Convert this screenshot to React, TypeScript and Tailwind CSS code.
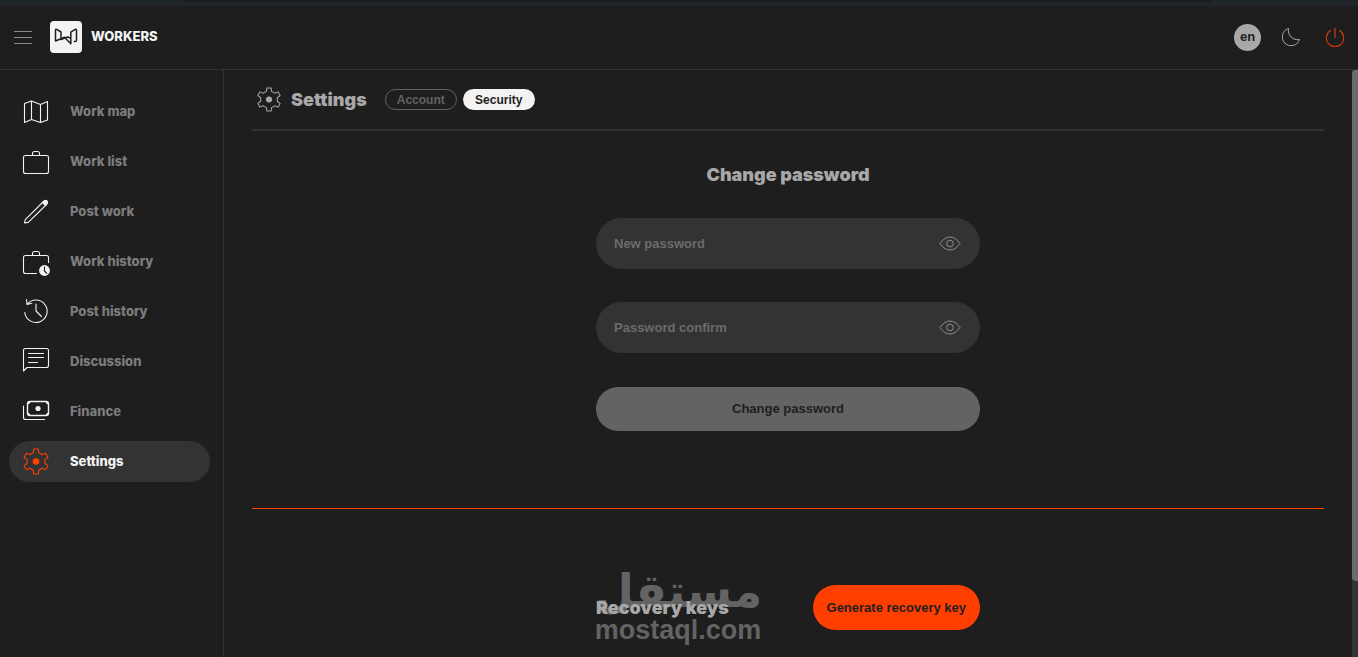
import React, { useState } from 'react';

interface IconProps {
  className?: string;
}

interface NavItem {
  label: string;
  icon: React.FC<IconProps>;
}

const GEAR_PATH =
  'M-2.8-8.6L-2.3-12.5H2.3L2.8-8.6Q4.6-8.2 6.05-6.72L9.68-8.24L11.98-4.26L8.85-1.88Q9.4 0 8.85 1.88L11.98 4.26L9.68 8.24L6.05 6.72Q4.6 8.2 2.8 8.6L2.3 12.5H-2.3L-2.8 8.6Q-4.6 8.2-6.05 6.72L-9.68 8.24L-11.98 4.26L-8.85 1.88Q-9.4 0-8.85-1.88L-11.98-4.26L-9.68-8.24L-6.05-6.72Q-4.6-8.2-2.8-8.6Z';

const SvgIcon: React.FC<{ children: React.ReactNode; className?: string }> = ({ children, className }) => (
  <svg
    viewBox="0 0 28 29"
    className={`shrink-0 ${className ?? ''}`}
    fill="none"
    stroke="currentColor"
    strokeWidth="1.1"
    strokeLinecap="round"
    strokeLinejoin="round"
    aria-hidden="true"
  >
    {children}
  </svg>
);

const MapIcon: React.FC<IconProps> = ({ className }) => (
  <SvgIcon className={className}>
    <path d="M2.5 6.5L9.5 4L18.5 7.5L25.5 4.5V23L18.5 25.5L9.5 22.5L2.5 25.5ZM9.5 4V22.5M18.5 7.5V25.5" />
  </SvgIcon>
);

const BriefcaseIcon: React.FC<IconProps> = ({ className }) => (
  <SvgIcon className={className}>
    <rect x="1.5" y="8.5" width="25" height="18" rx="2" />
    <path d="M10.5 8.5V6.5Q10.5 4.5 12.5 4.5H15.5Q17.5 4.5 17.5 6.5V8.5" />
  </SvgIcon>
);

const PencilIcon: React.FC<IconProps> = ({ className }) => (
  <SvgIcon className={className}>
    <path d="M2.5 26L3.3 22.7L21.5 4.5Q23.2 3 24.6 4.4Q26 5.8 24.5 7.5L6.3 25.4Z" />
    <path d="M20.5 5.5L22.5 3.7Q24 3 25 4Q26 5 25.3 6.5L23.5 8.5Z" fill="currentColor" />
  </SvgIcon>
);

const WorkHistoryIcon: React.FC<IconProps> = ({ className }) => (
  <SvgIcon className={className}>
    <path d="M14.5 26.5H3.5Q1.5 26.5 1.5 24.5V10.5Q1.5 8.5 3.5 8.5H24.5Q26.5 8.5 26.5 10.5V15.5" />
    <path d="M10.5 8.5V6.5Q10.5 4.5 12.5 4.5H15.5Q17.5 4.5 17.5 6.5V8.5" />
    <circle cx="22.5" cy="23.5" r="5.4" fill="currentColor" stroke="none" />
    <path d="M22.5 20V24L24.7 26.3" stroke="#1e1e1e" />
  </SvgIcon>
);

const HistoryIcon: React.FC<IconProps> = ({ className }) => (
  <SvgIcon className={className}>
    <path d="M2.8 15.5A11.2 11.2 0 1 0 5 7.5M4.5 2.5L5 7.5L9.8 6.3M14 7V14L19.5 19.5" />
  </SvgIcon>
);

const DiscussionIcon: React.FC<IconProps> = ({ className }) => (
  <SvgIcon className={className}>
    <path d="M1.5 24V3.5Q1.5 1.5 3.5 1.5H24.5Q26.5 1.5 26.5 3.5V18.5Q26.5 20.5 24.5 20.5H5ZM6.5 6.5H21.5M6.5 10.5H21.5M6.5 15.5H15.5" />
  </SvgIcon>
);

const FinanceIcon: React.FC<IconProps> = ({ className }) => (
  <SvgIcon className={className}>
    <rect x="5.5" y="4.5" width="21" height="14" rx="2.5" strokeWidth="1.4" />
    <path d="M5.5 7Q7.5 6.500 8 4.5M24 4.5Q24.5 6.500 26.5 7M5.5 16Q7.500 16.500 8 18.5M24 18.5Q24.5 16.500 26.5 16" />
    <circle cx="16" cy="11.5" r="2.6" fill="currentColor" stroke="none" />
    <path d="M1.5 9V20.5Q1.5 22.5 3.5 22.5H22.5" />
  </SvgIcon>
);

const GearIcon: React.FC<IconProps> = ({ className }) => (
  <SvgIcon className={className}>
    <g transform="translate(14 14.5)">
      <path d={GEAR_PATH} />
      <circle r="3.3" fill="currentColor" stroke="none" />
    </g>
  </SvgIcon>
);

const EyeIcon: React.FC = () => (
  <svg viewBox="0 0 22 16" className="h-4 w-[22px]" fill="none" stroke="currentColor" aria-hidden="true">
    <path d="M1 7.5Q5.5 1 11 1T21 7.5Q16.5 14 11 14T1 7.5Z" />
    <circle cx="11" cy="7.5" r="3.3" />
  </svg>
);

const NAV_ITEMS: NavItem[] = [
  { label: 'Work map', icon: MapIcon },
  { label: 'Work list', icon: BriefcaseIcon },
  { label: 'Post work', icon: PencilIcon },
  { label: 'Work history', icon: WorkHistoryIcon },
  { label: 'Post history', icon: HistoryIcon },
  { label: 'Discussion', icon: DiscussionIcon },
  { label: 'Finance', icon: FinanceIcon },
  { label: 'Settings', icon: GearIcon },
];

const Header: React.FC = () => (
  <header className="flex h-16 shrink-0 items-center border-b border-[#333333] px-[13px] pb-px">
    <button type="button" aria-label="Toggle menu" className="text-[#8a8a8a]">
      <svg viewBox="0 0 20 14" className="h-3.5 w-5" fill="none" stroke="currentColor" aria-hidden="true">
        <path d="M1 1.5H19M1 7.5H19M1 13.5H19" />
      </svg>
    </button>
    <a href="#home" className="ml-[17px] flex items-center gap-[9px]">
      <svg viewBox="0 0 32 32" className="h-8 w-8" fill="none" aria-hidden="true">
        <rect width="32" height="32" rx="4" fill="#f3f3f3" />
        <path
          d="M11 16.5V11L6.8 8.4Q5.5 8 5.5 9.3V20L14.500 16.300L20.8 22.8V11.2L25.2 8.4Q26.5 8 26.5 9.3V19.3Q26.2 20.8 24.3 20.500M11 18.500L17.500 16L20.500 17"
          stroke="#1e1e1e"
          strokeWidth="1.5"
          strokeLinejoin="round"
          strokeLinecap="round"
        />
      </svg>
      <span className="text-[13px] font-extrabold text-[#f3f3f3]">WORKERS</span>
    </a>
    <div className="ml-auto flex items-center">
      <button type="button" className="h-[27px] w-[27px] rounded-full bg-[#a8a8a8] font-['Liberation_Sans',sans-serif] text-[13px] font-bold text-[#1e1e1e]">
        en
      </button>
      <button type="button" aria-label="Dark mode" className="ml-5 text-[#a8a8a8]">
        <svg viewBox="0 0 20 20" className="h-5 w-5" fill="none" stroke="currentColor" strokeLinejoin="round" aria-hidden="true">
          <path d="M7.5 1.5A8.8 8.8 0 1 0 18.5 12.5A9.3 9.3 0 0 1 7.5 1.5Z" />
        </svg>
      </button>
      <button type="button" aria-label="Log out" className="ml-6 text-[#d8380a]">
        <svg viewBox="0 0 20 20" className="h-5 w-5" fill="none" stroke="currentColor" strokeLinecap="round" aria-hidden="true">
          <path d="M5.5 3.5A8.7 8.7 0 1 0 14.5 3.5" strokeWidth="1.1" />
          <path d="M10 1V10.5" strokeWidth="1.2" />
        </svg>
      </button>
    </div>
  </header>
);

const Sidebar: React.FC = () => (
  <nav className="w-56 shrink-0 border-r border-[#333333] pt-[21px] pr-[13px] pl-[9px]">
    <ul className="flex flex-col gap-[9px]">
      {NAV_ITEMS.map(({ label, icon: Icon }) => {
        const active = label === 'Settings';
        return (
          <li key={label}>
            <a
              href="#"
              aria-current={active ? 'page' : undefined}
              className={`flex h-[41px] items-center gap-5 rounded-full pl-[13px] text-[13px] font-extrabold ${active ? 'bg-[#333333] text-[#f3f3f3]' : 'text-[#7c7c7c]'}`}
            >
              <Icon className={active ? 'h-[29px] w-7 text-[#ff3f00]' : 'h-[29px] w-7 text-[#f3f3f3]'} />
              {label}
            </a>
          </li>
        );
      })}
    </ul>
  </nav>
);

const PasswordField: React.FC<{ id: string; label: string }> = ({ id, label }) => {
  const [visible, setVisible] = useState(false);

  return (
    <div className="relative flex h-[51px] items-center rounded-full bg-[#333333] pr-[19px] pl-[18px] text-[13px] font-bold">
      <input
        id={id}
        type={visible ? 'text' : 'password'}
        placeholder=" "
        className="peer min-w-0 flex-1 bg-transparent text-[#f3f3f3] outline-none"
      />
      <label htmlFor={id} className="absolute left-[18px] hidden text-[#6b6b6b] peer-placeholder-shown:block">{label}</label>
      <button type="button" aria-label="Show password" onClick={() => setVisible(!visible)} className="text-[#8f8f8f]">
        <EyeIcon />
      </button>
    </div>
  );
};

const Watermark: React.FC = () => (
  <div className="pointer-events-none absolute -top-7 left-0 flex w-[164px] flex-col items-center text-[#6b6b6b] opacity-90">
    <span lang="ar" dir="rtl" className="font-['DejaVu_Sans',sans-serif] text-[46px] leading-[50px] font-bold">مستقل</span>
    <span className="font-['Liberation_Sans',sans-serif] text-[27px] leading-7 font-bold">mostaql.com</span>
  </div>
);

const SecuritySettings: React.FC = () => (
  <main className="min-w-0 flex-1 overflow-hidden px-7">
    <div className="flex h-[61px] items-center border-b-2 border-[#333333]">
      <GearIcon className="ml-1 h-[27px] w-[26px] text-[#a8a8a8]" />
      <h1 className="ml-[9px] text-lg font-black text-[#a8a8a8]">Settings</h1>
      <div className="ml-[18px] flex gap-1.5 font-['Liberation_Sans',sans-serif] text-xs font-bold">
        <button type="button" className="h-[21px] w-[72px] rounded-full border border-[#636363] text-[#636363]">Account</button>
        <button type="button" className="h-[21px] w-[72px] rounded-full bg-[#f3f3f3] text-[#1e1e1e]">Security</button>
      </div>
    </div>

    <form className="mx-auto mt-[30px] flex w-96 flex-col font-['Liberation_Sans',sans-serif]" onSubmit={(e) => e.preventDefault()}>
      <h2 className="text-center font-['Inter',sans-serif] text-lg font-black text-[#a8a8a8]">Change password</h2>
      <div className="mt-[29px] flex flex-col gap-[33px]">
        <PasswordField id="new-password" label="New password" />
        <PasswordField id="confirm-password" label="Password confirm" />
      </div>
      <button type="submit" className="mt-[34px] h-11 rounded-full bg-[#636363] text-[13px] font-bold text-[#1e1e1e]">Change password</button>
    </form>

    <hr className="mt-[77px] h-px border-0 bg-[#ff3f00]" />

    <section className="mx-auto mt-[76px] flex w-96 items-center justify-between">
      <div className="relative">
        <Watermark />
        <h2 className="relative text-lg font-black text-[#a8a8a8]">Recovery keys</h2>
      </div>
      <button type="button" className="h-[45px] rounded-full bg-[#ff3f00] px-3.5 font-['Liberation_Sans',sans-serif] text-[13px] font-bold text-[#1e1e1e]">
        Generate recovery key
      </button>
    </section>
  </main>
);

const App: React.FC = () => (
  <div className="flex h-screen flex-col overflow-hidden bg-[#1e1e1e] font-['Inter',sans-serif]">
    <div className="h-1.5 shrink-0 bg-[#20272a] pr-[145px] pl-[183px]">
      <div className="h-0.5 rounded-b bg-[#1a1e1e]" />
    </div>
    <Header />
    <div className="flex min-h-0 flex-1">
      <Sidebar />
      <SecuritySettings />
      <div className="w-1.5 shrink-0 bg-[#333333]">
        <div className="h-[87%] rounded-l bg-[#6b6b6b]" />
      </div>
    </div>
  </div>
);

export default App;
